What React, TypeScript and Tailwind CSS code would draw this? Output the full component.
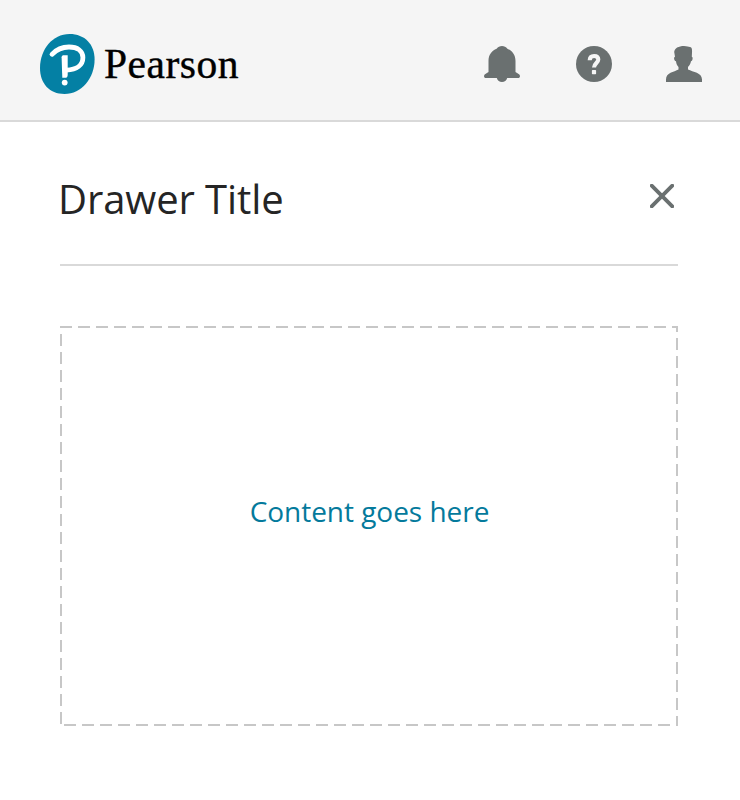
function PearsonMark() {
  return (
    <svg className="h-[60px] w-[55px]" viewBox="0 0 55 60" fill="none" aria-hidden="true">
      <path
        d="M29.500 0C45 0 54.600 10.500 54.600 25.500C54.600 44 41.500 60 24.500 60C9 60 0 49 0 34C0 15.500 12.500 0 29.500 0Z"
        fill="#0480a4"
      />
      <path d="M12 20.300C16.500 15.500 22 13 29 13C37.500 13 42.900 17 42.900 23.500C42.900 31 37 35.700 26.500 36.100" stroke="#fff" strokeWidth="4.800" strokeLinecap="round" />
      <path d="M21.600 23.300C21.600 21.800 22.500 21.200 24 21.200H27.700V41C27.700 43 26.500 43.800 25 43.800H22.300Z" fill="#fff" />
      <circle cx="24.700" cy="48.600" r="2.900" fill="#fff" />
    </svg>
  );
}

function BellIcon() {
  return (
    <svg className="size-9" viewBox="0 0 36 36" fill="#6a7070" role="img" aria-label="Notifications">
      <path d="M12.600 2.800C14 .8 15.800 0 18 0S22 .8 23.400 2.800C28 4.700 31.500 8.500 31.500 15V26L35 28.300C36.600 29.500 36.200 32 34 32H23.200C22.500 34.500 20.500 36 18 36S13.500 34.500 12.800 32H2C-.2 32-.6 29.500 1 28.300L4.500 26V15C4.500 8.500 8 4.700 12.600 2.800Z" />
    </svg>
  );
}

function HelpIcon() {
  return (
    <svg className="size-9" viewBox="0 0 36 36" fill="none" role="img" aria-label="Help">
      <circle cx="18" cy="18" r="18" fill="#6a7070" />
      <path d="M13.700 14.200C13.800 11.400 15.500 10 18.100 10C20.700 10 22.300 11.400 22.300 13.600C22.300 16.800 18 17.400 18 21.600" stroke="#f5f5f5" strokeWidth="4.100" />
      <rect x="15.900" y="24" width="4.200" height="4.200" rx=".7" fill="#f5f5f5" />
    </svg>
  );
}

function UserIcon() {
  return (
    <svg className="size-9" viewBox="0 0 36 36" fill="#6a7070" role="img" aria-label="Account">
      <path d="M8.200 6C8.500 2.200 12.500 0 18 0C21 0 22.500 .9 24 1C26.400 1.500 26.300 4 25.800 10.800C27.200 11.200 26.800 14.800 25 15.300C24.500 18 23.500 19.500 22 21V23.500C27 26 36 26.500 36 33.500V36H0V33.500C0 26.500 8 26 12.500 23.500V21C11 19.500 10.300 18 10 15.300C8 14.800 7.500 11.200 9 10.800Z" />
    </svg>
  );
}

function CloseIcon() {
  return (
    <svg className="h-6 w-6" viewBox="0 0 24 24" role="img" aria-label="Close">
      <path d="M1.700 1.700 22.300 22.300M22.300 1.700 1.700 22.300" stroke="#6a7070" strokeWidth="3.800" strokeLinecap="round" />
    </svg>
  );
}

function DashedOutline() {
  return (
    <svg className="absolute inset-0" width="618" height="400" stroke="#c7c7c7" strokeWidth="2" strokeDasharray="12 6" aria-hidden="true">
      <path d="M0 1H618" />
      <path d="M1 8V398" />
      <path d="M4 399H614" />
      <path d="M617 0V400" strokeDashoffset="6" />
    </svg>
  );
}

export default function App() {
  return (
    <div className="h-[800px] w-[740px] bg-white font-['Open_Sans',sans-serif]">
      <header className="flex h-[122px] items-start justify-between border-b-2 border-[#d9d9d9] bg-[#f5f5f5] pl-10 pr-[38px]">
        <div className="mt-[34px] flex items-start gap-[9px]">
          <PearsonMark />
          <span className="mt-1.5 font-['Liberation_Serif',serif] text-[41.5px] leading-[48px] tracking-[0.5px] text-black [-webkit-text-stroke:0.4px_black]">Pearson</span>
        </div>
        <nav className="mt-[46px] flex">
          <div className="mr-14"><BellIcon /></div>
          <div className="mr-[54px]"><HelpIcon /></div>
          <UserIcon />
        </nav>
      </header>
      <main className="ml-[60px] w-[618px]">
        <div className="flex h-36 items-start justify-between border-b-2 border-[#d9d9d9] pr-1">
          <h1 className="-ml-[2px] mt-[50px] text-[40px] leading-[54px] tracking-[-0.1px] text-[#252525]">Drawer Title</h1>
          <button className="mt-[62px]"><CloseIcon /></button>
        </div>
        <section className="relative mt-[60px] flex h-[400px] items-center justify-center">
          <DashedOutline />
          <p className="-mt-[30px] ml-px text-[28px] leading-[38px] tracking-[-0.03px] text-[#047a9c]">Content goes here</p>
        </section>
      </main>
    </div>
  );
}
